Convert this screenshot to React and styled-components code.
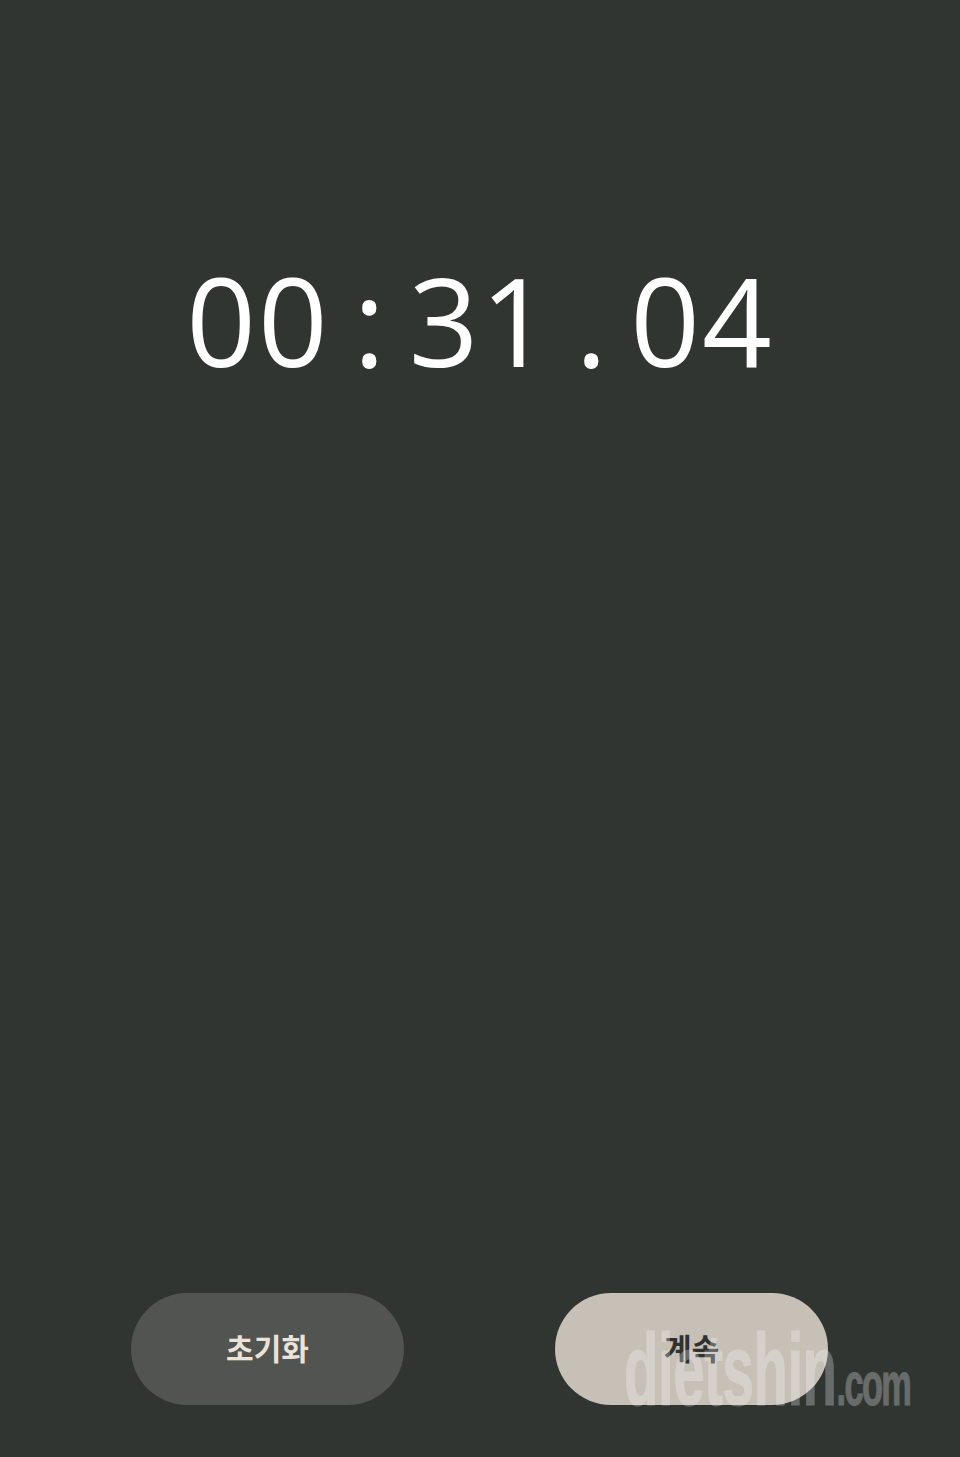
import React from 'react';
import styled, { createGlobalStyle } from 'styled-components';

const GlobalStyle = createGlobalStyle`
  html, body {
    margin: 0;
    padding: 0;
    background-color: #303532;
  }
`;

const Screen = styled.div`
  position: relative;
  display: flex;
  flex-direction: column;
  justify-content: space-between;
  width: 960px;
  height: 1457px;
  overflow: hidden;
  background-color: #303532;
`;

const Timer = styled.div`
  display: flex;
  align-items: center;
  justify-content: center;
  height: 140px;
  margin-top: 250px;
  color: #ffffff;
  font-family: 'Open Sans', 'Noto Sans', sans-serif;
  font-size: 122px;
  font-weight: 400;
  line-height: 140px;
`;

const Digits = styled.span`
  display: block;
  letter-spacing: 2px;
`;

const Separator = styled.span`
  display: flex;
  justify-content: center;
  width: ${(props) => props.width}px;
`;

const Controls = styled.div`
  display: flex;
  gap: 151px;
  justify-content: center;
  padding: 0 1px 52px 0;
`;

const PillButton = styled.button`
  display: flex;
  align-items: center;
  justify-content: center;
  width: 273px;
  height: 112px;
  padding: 0 0 ${(props) => props.lift}px;
  border: 0;
  border-radius: 56px;
  background-color: ${(props) => props.background};
  color: ${(props) => props.color};
  font-family: 'Noto Sans CJK KR', sans-serif;
  font-size: 30px;
  font-weight: 700;
`;

const Watermark = styled.div`
  position: absolute;
  left: 624px;
  top: 1320px;
  display: flex;
  align-items: baseline;
  color: #ffffff;
  font-family: 'Liberation Sans', sans-serif;
  font-weight: 700;
  white-space: nowrap;
  opacity: 0.27;
  -webkit-text-stroke: 1px #ffffff;
  transform-origin: left top;
  transform: scaleX(0.555);
  pointer-events: none;
`;

const WatermarkName = styled.span`
  font-size: 102px;
  line-height: 100px;
  letter-spacing: -1px;
`;

const WatermarkDomain = styled.span`
  font-size: 62px;
  line-height: 100px;
  letter-spacing: -3px;
`;

const App = () => {
  return (
    <Screen>
      <GlobalStyle />
      <Timer>
        <Digits>00</Digits>
        <Separator width={79}>:</Separator>
        <Digits>31</Digits>
        <Separator width={78}>.</Separator>
        <Digits>04</Digits>
      </Timer>
      <Controls>
        <PillButton background="#515451" color="#ebe3d8" lift={4}>
          초기화
        </PillButton>
        <PillButton background="#c6c0b7" color="#2f3230" lift={5}>
          계속
        </PillButton>
      </Controls>
      <Watermark>
        <WatermarkName>dietshin</WatermarkName>
        <WatermarkDomain>.com</WatermarkDomain>
      </Watermark>
    </Screen>
  );
};

export default App;
